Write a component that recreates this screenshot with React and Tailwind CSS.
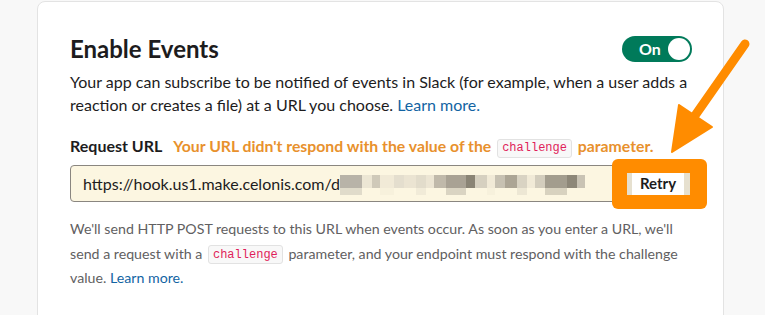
import React from 'react';

// pixelated (redacted) part of the webhook url
const blurTop = [
  [22, '#b8b3a8'], [10, '#ece6d4'], [8, '#cfc9b9'], [14, '#f1ead7'], [10, '#e4dece'],
  [12, '#ebe4d2'], [10, '#e2dccb'], [8, '#ece5d3'], [12, '#c0b9aa'], [20, '#a9a294'],
  [9, '#8a8475'], [12, '#d6d0c0'], [8, '#f1ead7'], [10, '#c7c1b2'], [12, '#aca595'],
  [10, '#d9d3c3'], [8, '#f1ead7'], [10, '#d3cdbd'], [22, '#a39d8e'], [10, '#8d8778'],
  [8, '#c9c3b4'],
];

const Chip = ({ children }) => (
  <span className="inline-flex items-center h-[19px] px-[4px] mx-[2px] rounded-[3px] bg-[#f8f8f8] border border-[#e2e2e2] font-['Liberation_Mono',monospace] text-[12px] leading-none font-normal text-[#e01e5a] align-[1px]">
    {children}
  </span>
);

export default function App() {
  return (
    <div className="relative h-[315px] w-[765px] overflow-hidden bg-[#f8f8f8] font-['Lato',sans-serif] text-[#1d1c1d]">
      <div className="ml-[37px] mt-[1px] w-[687px] h-[340px] bg-white border border-[#e3e3e3] rounded-lg pl-[32px] pr-[31px] pt-[31px]">
        <div className="flex items-center justify-between">
          <h2 className="text-[24px] font-bold leading-[32px]">Enable Events</h2>
          <div className="flex items-center h-[26px] w-[70px] rounded-full bg-[#007a5a] pl-[17px] pr-[2px] justify-between">
            <span className="text-white font-bold text-[16px] leading-none">On</span>
            <span className="h-[22px] w-[22px] rounded-full bg-white" />
          </div>
        </div>

        <p className="mt-[5px] text-[16px] leading-[23px] text-[#1d1c1d] w-[630px]">
          Your app can subscribe to be notified of events in Slack (for example, when a user adds a
          reaction or creates a file) at a URL you choose.{' '}
          <span className="text-[#1264a3]">Learn more.</span>
        </p>

        <div className="mt-[20px] flex items-center h-[20px] text-[16px] font-bold">
          <span>Request URL</span>
          <span className="ml-[11px] text-[15.8px] text-[#e8912d]">
            Your URL didn't respond with the value of the <Chip>challenge</Chip> parameter.
          </span>
        </div>

        <div className="relative mt-[9px] h-[37px] w-[622px] flex items-center rounded border border-[#8a8680] bg-[#fcf6e1] pl-[12px] pr-[1px]">
          <span className="text-[16px] text-[#1d1c1d]">https://hook.us1.make.celonis.com/d</span>
          <span className="flex flex-col mt-[2px]">
            <span className="flex h-[13px]">
              {blurTop.map(([w, c], i) => (
                <span key={i} style={{ width: w, background: c }} />
              ))}
            </span>
            <span className="flex h-[7px] opacity-40">
              {blurTop.map(([w, c], i) => (
                <span key={i} style={{ width: w, background: i % 3 === 0 ? c : 'transparent' }} />
              ))}
            </span>
          </span>
          <div className="absolute left-[541px] top-[-7px] w-[95px] h-[50px] rounded-[6px] bg-[#ff8c00]" />
          <button className="relative ml-auto flex h-[22px] w-[63px] border-l-[5px] border-r-[6px] border-[#e6e0cf] bg-white items-center justify-center text-[15px] font-bold text-[#1d1c1d]">
            Retry
          </button>
        </div>

        <p className="mt-[15px] text-[14.2px] leading-[24.5px] text-[#616061] w-[630px]">
          We'll send HTTP POST requests to this URL when events occur. As soon as you enter a URL, we'll
          send a request with a <Chip>challenge</Chip> parameter, and your endpoint must respond with the challenge
          value. <span className="text-[#1264a3]">Learn more.</span>
        </p>
      </div>

      {/* annotation arrow */}
      <svg className="absolute left-0 top-0 pointer-events-none" width="765" height="315">
        <line x1="745" y1="44" x2="694" y2="117" stroke="#ff8c00" strokeWidth="9" strokeLinecap="round" />
        <polygon points="679,105 712,127 672,152" fill="#ff8c00" stroke="#ff8c00" strokeWidth="2" strokeLinejoin="round" />
      </svg>
    </div>
  );
}
